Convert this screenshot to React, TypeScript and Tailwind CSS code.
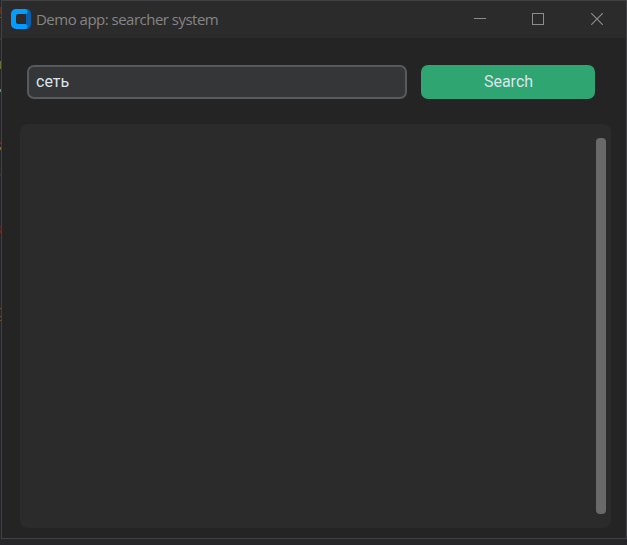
const specks = [
  { top: 7, height: 7, color: '#5a3020' },
  { top: 17, height: 1, color: '#5c5a3a' },
  { top: 38, height: 2, color: '#244224' },
  { top: 61, height: 8, color: '#66752e' },
  { top: 89, height: 3, color: '#4f9a62' },
  { top: 142, height: 2, color: '#6b2b22' },
  { top: 147, height: 3, color: '#a05a1c' },
  { top: 174, height: 2, color: '#2b3a28' },
  { top: 226, height: 2, color: '#5a2020' },
  { top: 230, height: 3, color: '#6a2222' },
  { top: 308, height: 1, color: '#6b4c2c' },
  { top: 316, height: 1, color: '#6b4c2c' },
  { top: 320, height: 1, color: '#6b4c2c' },
];

function Logo() {
  return (
    <svg width="20" height="20" viewBox="0 0 20 20" className="shrink-0">
      <path d="M14 0h1.5A4.5 4.5 0 0 1 20 4.5v11a4.5 4.5 0 0 1-4.5 4.5H13l2-5V5z" fill="#0860ae" />
      <path
        d="M5 0h9a2.5 2.5 0 0 1 0 5H7a2 2 0 0 0-2 2v6a2 2 0 0 0 2 2h7a2.5 2.5 0 0 1 0 5H5a5 5 0 0 1-5-5V5a5 5 0 0 1 5-5z"
        fill="#059cff"
      />
    </svg>
  );
}

function TitleBar() {
  return (
    <header className="flex h-[37px] shrink-0 items-start bg-[#2b2b2b] pt-2 pl-[9px]">
      <Logo />
      <h1 className="ml-[5px] flex-1 whitespace-nowrap font-['Open_Sans','Noto_Sans',sans-serif] text-[15px] leading-[21px] font-normal tracking-[-0.51px] text-[#858585]">
        Demo app: searcher system
      </h1>
      <div className="mt-1 mr-[23px] flex text-[#8c8c8c]">
        <svg className="mr-[46px]" width="12" height="12" viewBox="0 0 12 12" fill="none" stroke="currentColor">
          <path d="M0 5.5h12" />
        </svg>
        <svg className="mr-[47px]" width="12" height="12" viewBox="0 0 12 12" fill="none" stroke="currentColor">
          <rect x=".5" y=".5" width="11" height="11" />
        </svg>
        <svg width="12" height="12" viewBox="0 0 12 12" fill="none" stroke="currentColor" strokeWidth="1.2">
          <path d="M.2.2l11.6 11.6M11.8.2.2 11.8" />
        </svg>
      </div>
    </header>
  );
}

export default function App() {
  return (
    <div className="relative h-[545px] w-[627px] overflow-hidden bg-[#26252a] pl-px">
      {specks.map((s) => (
        <i key={s.top} className="absolute left-0 w-px" style={{ top: s.top, height: s.height, background: s.color }} />
      ))}
      <div className="flex h-[539px] w-[626px] flex-col border border-[#414144] bg-[#242424] font-['Roboto','Liberation_Sans',sans-serif]">
        <TitleBar />
        <form className="mt-[27px] ml-[25px] flex h-[34px] shrink-0 gap-3.5" onSubmit={(e) => e.preventDefault()}>
          <input
            defaultValue="сеть"
            className="h-full w-[380px] rounded-[7px] border-2 border-[#565b5e] bg-[#343638] px-[7px] pb-0.5 text-base text-[#dce4ee] outline-none"
          />
          <button className="h-full w-[174px] rounded-[7px] bg-[#2fa572] pl-px text-base text-[#dce4ee]">Search</button>
        </form>
        <main className="mt-[25px] ml-[18px] flex h-[404px] w-[591px] shrink-0 justify-end rounded-lg bg-[#2b2b2b] pt-3.5 pr-[5px]">
          <div className="h-[376px] w-2.5 rounded-[4px] bg-[#696969]" />
        </main>
      </div>
    </div>
  );
}
